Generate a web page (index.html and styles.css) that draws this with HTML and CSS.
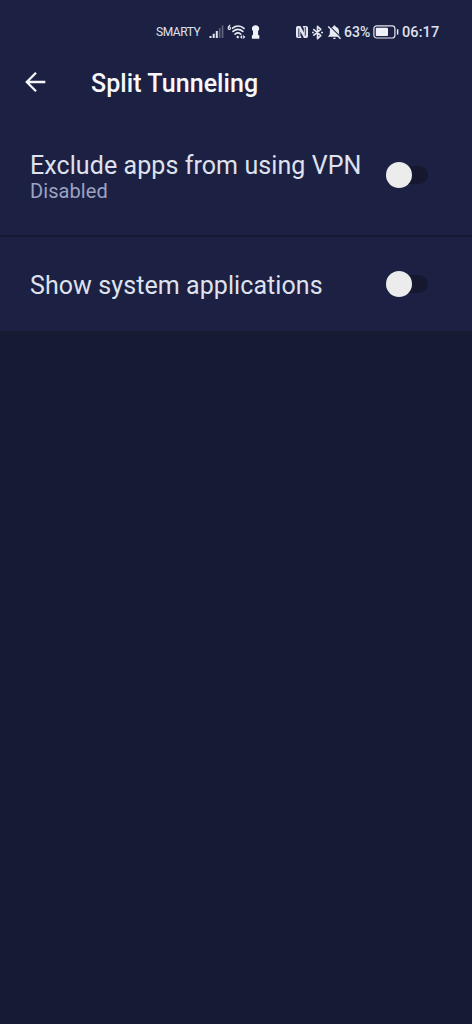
FILE: index.html
```html
<!DOCTYPE html>
<html lang="en">
<head>
<meta charset="utf-8">
<title>Split Tunneling</title>
<link rel="stylesheet" href="styles.css">
</head>
<body>
<div class="statusbar">
  <span class="carrier">SMARTY</span>
  <svg class="signal" width="15" height="14" viewBox="0 0 15 14"><g fill="#e3e5f0"><path d="M.5 11h2v2h-2zM3.7 8.8h2V13h-2zM6.8 6h2v7h-2z"/><path opacity=".35" d="M9.8 3.2h1.7V13H9.8zM12.7.5h1.7V13h-1.7z"/></g></svg>
  <svg class="wifi" width="20" height="16" viewBox="0 0 20 16"><g fill="none" stroke="#e8eaf4" stroke-linecap="round"><path stroke-width="1.1" d="M2.9 1.1C1.7 1.9 1.1 2.9 1.1 4.2a1.2 1.2 0 1 0 2.4 0c0-1.5-2-1.5-2.4-.3"/><path stroke-width="1.7" d="M5.6 4.2C9 1.3 13.6 1.3 17 4.4M6 7.4c3-2.6 6.8-2.6 9.8 0M8.1 10.1c1.7-1.4 3.9-1.4 5.6 0"/></g><path fill="#e8eaf4" d="M10.7 11.5l1.6 1.5-1.6 1.5L9.1 13zM13 13l2.2-1.9v3.8zM18.4 13l-2.2-1.9v3.8z"/></svg>
  <svg class="keyhole" width="9" height="14" viewBox="0 0 9 14"><path fill="#f0f1f8" d="M4.5.2C2.3.2.9 1.6.9 3.4c0 1.1.4 1.9 1.1 2.6v3.8L.9 10.4v3.3h7.4v-3.3l-1.2-.6V6c.7-.7 1.1-1.5 1.1-2.6C8.2 1.6 6.7.2 4.5.2z"/></svg>
  <svg class="nfc" width="14" height="14" viewBox="0 0 14 14"><path fill="#e3e5f0" d="M2.8 1h2.6l3.4 6.4V3.6L7.6 1h3.6A1.8 1.8 0 0 1 13 2.8v8.4a1.8 1.8 0 0 1-1.8 1.8H8.9L5.4 6.6v3.9L6.6 13H2.8A1.8 1.8 0 0 1 1 11.2V2.8A1.8 1.8 0 0 1 2.8 1z"/><path fill="none" stroke="#1c2143" stroke-width=".9" d="M3.8 12V3.4M10.3 2v8.6"/></svg>
  <svg class="bluetooth" width="11" height="15" viewBox="0 0 11 15"><path fill="none" stroke="#e3e5f0" stroke-width="1.6" stroke-linejoin="round" d="M1.3 4.2l7.5 6.4-3.3 3V1.3l3.3 3-7.5 6.4"/><path fill="#e3e5f0" d="M0 6.7h1.9v1.6H0zM9.1 6.7H11v1.6H9.1z"/></svg>
  <svg class="bell" width="15" height="15" viewBox="0 0 15 15"><path fill="#e8eaf4" d="M7.4.5c-.8 0-1.2.5-1.2 1.2C3.7 2.4 2.8 4.3 2.8 6.4v2.8L.9 11.8h12.6L12 9.2V6.4c0-2.1-.9-4-3.4-4.7C8.6 1 8.2.5 7.4.5zM5.9 12.7h3c-.3 1.7-2.7 1.7-3 0z"/><path fill="none" stroke="#1c2143" stroke-width="1.1" d="M2.2.6L14.6 13"/><path fill="none" stroke="#e8eaf4" stroke-width="1.4" d="M1.2 1.4L13.6 13.8"/></svg>
  <span class="percent">63%</span>
  <svg class="battery" width="26" height="14" viewBox="0 0 26 14"><rect x=".9" y=".8" width="21" height="12.2" rx="2.8" fill="none" stroke="#e3e5f0" stroke-width="1.2"/><rect x="2.8" y="2.7" width="12.2" height="8.4" rx="1" fill="#f0f1f8"/><path stroke="#e3e5f0" stroke-width="1.5" d="M24.6 4.2v5.4"/></svg>
  <span class="clock">06:17</span>
</div>
<header class="toolbar">
  <svg class="back" width="22" height="22" viewBox="0 0 22 22"><path fill="none" stroke="#f6f6fb" stroke-width="2.3" d="M21.3 11H2.8M12 1.8L2.8 11l9.2 9.2"/></svg>
  <h1 class="title">Split Tunneling</h1>
</header>
<main>
  <section class="row row-exclude">
    <div class="text">
      <div class="label">Exclude apps from using VPN</div>
      <div class="summary">Disabled</div>
    </div>
    <div class="switch"><span class="thumb"></span></div>
  </section>
  <section class="row row-system">
    <div class="label">Show system applications</div>
    <div class="switch"><span class="thumb"></span></div>
  </section>
</main>
</body>
</html>
```
FILE: styles.css
```css
* { box-sizing: border-box; }
body {
  margin: 0;
  min-height: 1024px;
  background: #161a33;
  font-family: Roboto, sans-serif;
  color: #dfe1ed;
}
svg { display: block; flex: none; }
.statusbar {
  display: flex;
  align-items: center;
  height: 64px;
  padding-left: 156px;
  background: #1c2143;
  white-space: nowrap;
}
.carrier { width: 44px; font-size: 12px; letter-spacing: -0.45px; }
.signal { margin-left: 9px; }
.wifi { margin-left: 3px; }
.keyhole { margin-left: 4px; }
.nfc { margin-left: 35px; }
.bluetooth { margin-left: 3px; }
.bell { margin-left: 4px; }
.percent { width: 28px; margin-left: 2px; font-size: 14px; font-weight: 500; }
.battery { margin-left: 1px; }
.clock { margin-left: 3px; padding-top: 1px; font-size: 14.5px; font-weight: 500; letter-spacing: 0.1px; }
.toolbar {
  display: flex;
  align-items: center;
  height: 46px;
  padding: 0 0 8px 24px;
  background: #1c2143;
}
.back { margin-bottom: 2px; }
.title { margin: 2px 0 0 45px; font-size: 25px; line-height: 36px; font-weight: 500; letter-spacing: 0.08px; color: #f8f8fc; white-space: nowrap; }
.row {
  display: flex;
  justify-content: space-between;
  padding: 0 44px 0 30px;
  background: #1c2143;
}
.row-exclude {
  height: 127px;
  padding-top: 41px;
  border-bottom: 2px solid #151834;
}
.row-system { height: 94px; padding-top: 34px; }
.label { font-size: 25px; line-height: 30px; letter-spacing: 0.08px; white-space: nowrap; }
.summary { margin-top: -2px; font-size: 20px; line-height: 24px; letter-spacing: 0.08px; color: #9da2c3; }
.switch {
  display: flex;
  align-items: center;
  width: 34px;
  height: 18px;
  margin-top: 15px;
  border-radius: 9px;
  background: #15182f;
}
.row-system .switch { margin-top: 4px; }
.thumb {
  flex: none;
  width: 26px;
  height: 26px;
  margin-left: -8px;
  border-radius: 50%;
  background: #ececec;
}
```
